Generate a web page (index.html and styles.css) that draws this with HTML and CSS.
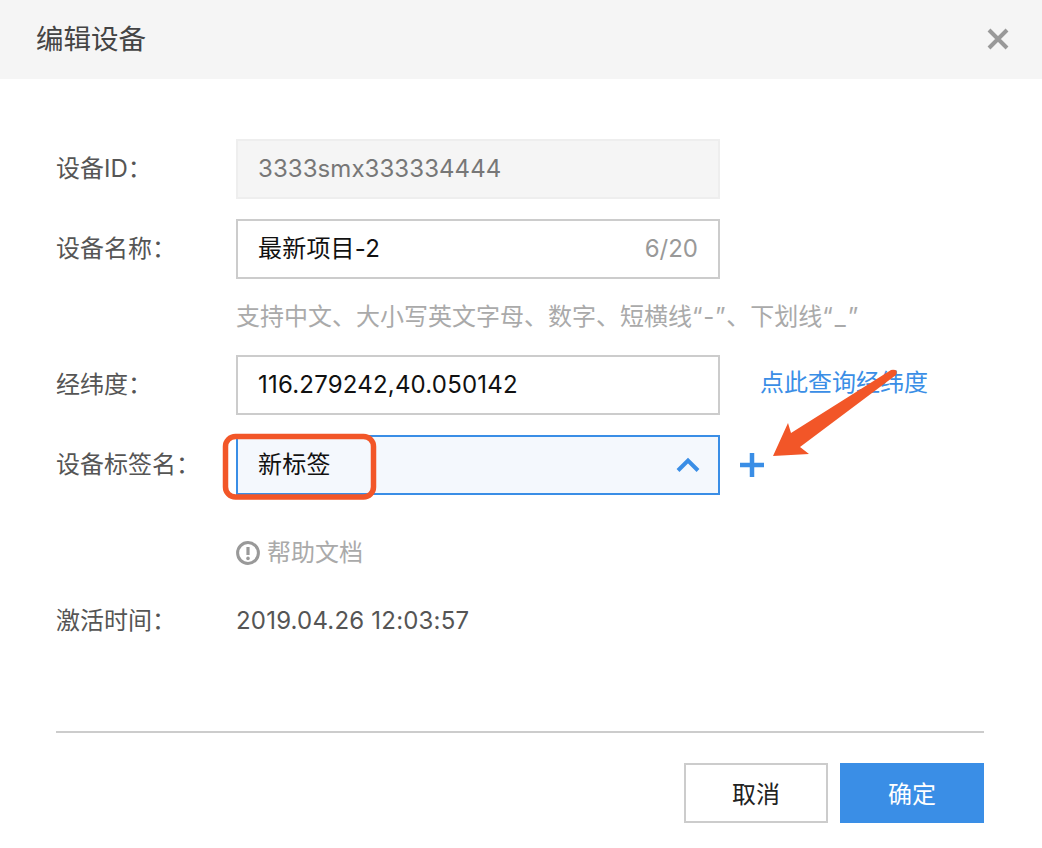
FILE: index.html
```html
<!DOCTYPE html>
<html lang="zh-CN">
<head>
<meta charset="utf-8">
<title>编辑设备</title>
<link rel="stylesheet" href="styles.css">
</head>
<body>
<div class="dialog">
  <header class="head">
    <h1 class="title">编辑设备</h1>
    <svg class="close" width="22" height="22" viewBox="0 0 22 22"><path d="M2 2L20 20M20 2L2 20" stroke="#999" stroke-width="4" fill="none"/></svg>
  </header>
  <main class="form">
    <div class="row">
      <label class="label">设备ID：</label>
      <div class="field disabled"><span class="value">3333smx333334444</span></div>
    </div>
    <div class="row">
      <label class="label">设备名称：</label>
      <div class="field"><span class="value dark">最新项目-2</span><span class="count">6/20</span></div>
    </div>
    <div class="hint">支持中文、大小写英文字母、数字、短横线<span class="q1">“-”</span>、下划线<span class="q2">“_”</span></div>
    <div class="row">
      <label class="label">经纬度：</label>
      <div class="field"><span class="value dark">116.279242,40.050142</span></div>
      <a class="link">点此查询经纬度</a>
    </div>
    <div class="row">
      <label class="label">设备标签名：</label>
      <div class="field open">
        <span class="value dark">新标签</span>
        <svg class="chev" width="24" height="16" viewBox="0 0 24 16"><path d="M2 13.5L12 3.5L22 13.5" stroke="#3a8ee6" stroke-width="4" fill="none"/></svg>
      </div>
      <svg class="plus" width="24" height="24" viewBox="0 0 24 24"><path d="M12 0V24M0 12H24" stroke="#3a8ee6" stroke-width="4.5" fill="none"/></svg>
    </div>
    <div class="help">
      <svg class="help-icon" width="24" height="24" viewBox="0 0 24 24"><circle cx="12" cy="12" r="10.4" stroke="#999" stroke-width="3" fill="none"/><path d="M12 6V14" stroke="#999" stroke-width="3.2" fill="none"/><circle cx="12" cy="17.4" r="1.8" fill="#999"/></svg>
      <span>帮助文档</span>
    </div>
    <div class="row plain">
      <label class="label">激活时间：</label>
      <span class="time">2019.04.26 12:03:57</span>
    </div>
  </main>
  <footer class="foot">
    <button class="btn">取消</button>
    <button class="btn primary">确定</button>
  </footer>
</div>
<svg class="annot" width="1042" height="848" viewBox="0 0 1042 848">
  <rect x="225.5" y="436.5" width="148" height="60.5" rx="10" fill="none" stroke="#f25628" stroke-width="5.5"/>
  <path d="M891 370L791 433L788 423L773 456L809 454L800 447L896 375Q899 369 891 370Z" fill="#f25628"/>
</svg>
</body>
</html>
```
FILE: styles.css
```css
* { box-sizing: border-box; }
html, body { margin: 0; padding: 0; background: #fff; }
body {
  width: 1042px;
  height: 848px;
  position: relative;
  overflow: hidden;
  font-family: "Inter", "Noto Sans CJK SC", sans-serif;
  font-size: 24px;
  line-height: 32px;
  color: #555;
}
.head {
  height: 79px;
  background: #f5f5f5;
  display: flex;
  align-items: center;
  justify-content: space-between;
  padding: 0 33px 2px 36px;
}
.title { margin: 0; font-size: 27.5px; font-weight: 400; color: #444; }
.form { padding: 60px 0 0 56px; }
.row { display: flex; align-items: center; height: 60px; margin-bottom: 20px; }
.label { width: 180px; flex: none; color: #555; }
.field {
  width: 484px;
  height: 60px;
  border: 2px solid #ccc;
  background: #fff;
  display: flex;
  align-items: center;
  justify-content: space-between;
  padding: 0 20px;
}
.field.disabled { background: #f5f5f5; border-color: #eee; }
.field.open { border-color: #3a8ee6; background: #f4f8fd; }
.value { color: #777; letter-spacing: 0.07px; }
.value.dark { color: #111; letter-spacing: 0.2px; }
.count { color: #999; }
.chev { margin-right: -2px; }
.hint { margin: 0 0 20px 180px; height: 36px; line-height: 36px; color: #aaa; white-space: nowrap; }
.q1 { letter-spacing: 0.7px; }
.q2 { letter-spacing: 2px; }
.link { margin-left: 40px; color: #3a8ee6; margin-top: -4px; }
.plus { margin-left: 20px; }
.help { margin-left: 180px; height: 76px; display: flex; align-items: center; gap: 7px; color: #aaa; }
.help-icon { flex: none; }
.plain { height: 60px; margin-bottom: 0; }
.time { color: #555; letter-spacing: 0.2px; }
.foot {
  position: absolute;
  left: 56px;
  right: 58px;
  top: 731px;
  border-top: 2px solid #ccc;
  padding-top: 30px;
  display: flex;
  justify-content: flex-end;
  gap: 12px;
}
.btn {
  width: 144px;
  height: 60px;
  border: 2px solid #ccc;
  background: #fff;
  font: inherit;
  color: #222;
  padding: 3px 0 0;
}
.btn.primary { background: #3a8ee6; border-color: #3a8ee6; color: #fff; }
.annot { position: absolute; left: 0; top: 0; pointer-events: none; }
```
